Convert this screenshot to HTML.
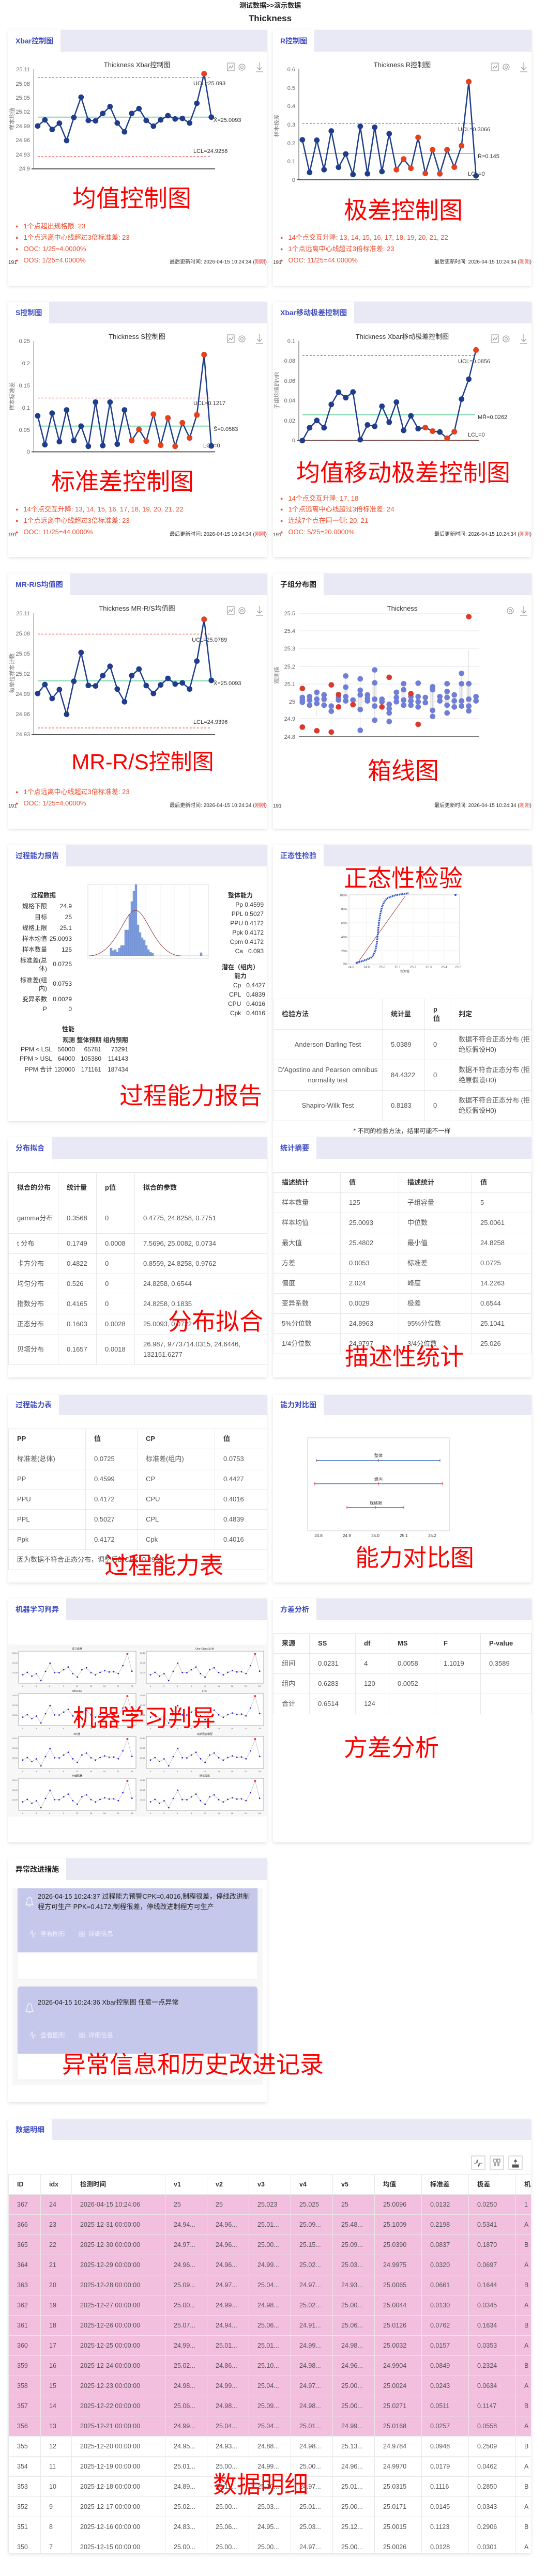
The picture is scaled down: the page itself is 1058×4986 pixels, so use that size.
<!DOCTYPE html>
<html><head><meta charset="utf-8">
<style>
*{margin:0;padding:0;box-sizing:border-box}
body{width:1058px;height:4986px;position:relative;background:#fff;font-family:"Liberation Sans","Noto Sans CJK SC",sans-serif;color:#333;overflow:hidden}
.card{position:absolute;background:#fff;box-shadow:0 2px 6px rgba(0,0,0,.12)}
.tabbar{position:absolute;left:0;right:0;top:0;height:42px;background:#e9e9f6}
.tab{position:absolute;left:0;top:0;height:42px;background:#fff;color:#3d4bc0;font-weight:bold;font-size:14px;line-height:42px;padding:0 14px;white-space:nowrap}
.tab.k{color:#222}
.big{position:absolute;color:#f00;font-size:46px;transform:translate(-50%,-50%);white-space:nowrap;line-height:1;font-family:"Liberation Sans","Noto Sans CJK SC",sans-serif}
.b{position:absolute;font-size:13px;color:#ee4d2d;white-space:nowrap;line-height:16px}
.b i{font-style:normal;font-size:9px;margin-right:10px;position:relative;top:-1px}
.ft{position:absolute;font-size:10px;color:#333;white-space:nowrap;line-height:12px}
.ft span{color:#e33}
.t{position:absolute;white-space:nowrap;font-size:12px;color:#333;line-height:14px}
table{position:absolute;border-collapse:collapse;font-size:13px;color:#555;table-layout:fixed}
td,th{border:1px solid #e8e8e8;padding:0 0 0 16px;text-align:left;vertical-align:middle;line-height:20px;overflow:hidden;white-space:nowrap}
th{font-weight:bold;color:#333}
.wr td,.wr th{white-space:normal}
svg{position:absolute;overflow:visible}
.ax{font-size:11px;fill:#666;font-family:"Liberation Sans",sans-serif}
.ti{font-size:13px;fill:#333;font-family:"Liberation Sans","Noto Sans CJK SC",sans-serif}
.lb{font-size:11px;fill:#333;font-family:"Liberation Sans",sans-serif}
.yt{font-size:11px;fill:#777;font-family:"Liberation Sans","Noto Sans CJK SC",sans-serif}
.pink td{background:#f3bfdf}
</style></head><body>

<div class="t" style="left:0;width:1045px;text-align:center;top:4px;font-size:13px;font-weight:bold;color:#222">测试数据&gt;&gt;演示数据</div>
<div class="t" style="left:0;width:1045px;text-align:center;top:26px;font-size:17px;font-weight:bold;color:#222;line-height:20px">Thickness</div>

<!-- ROW 1 -->
<div class="card" style="left:16px;top:58px;width:500px;height:495px"><div class="tabbar"></div><div class="tab">Xbar控制图</div></div>
<div class="card" style="left:528px;top:58px;width:500px;height:495px"><div class="tabbar"></div><div class="tab">R控制图</div></div>
<!-- ROW 2 -->
<div class="card" style="left:16px;top:584px;width:500px;height:494px"><div class="tabbar"></div><div class="tab">S控制图</div></div>
<div class="card" style="left:528px;top:584px;width:500px;height:494px"><div class="tabbar"></div><div class="tab">Xbar移动极差控制图</div></div>
<!-- ROW 3 -->
<div class="card" style="left:16px;top:1110px;width:500px;height:494px"><div class="tabbar"></div><div class="tab">MR-R/S均值图</div></div>
<div class="card" style="left:528px;top:1110px;width:500px;height:494px"><div class="tabbar"></div><div class="tab k">子组分布图</div></div>
<!-- ROW 4 -->
<div class="card" style="left:16px;top:1635px;width:500px;height:535px"><div class="tabbar"></div><div class="tab">过程能力报告</div></div>
<div class="card" style="left:528px;top:1635px;width:500px;height:566px"><div class="tabbar"></div><div class="tab">正态性检验</div></div>
<!-- ROW 5 -->
<div class="card" style="left:16px;top:2201px;width:500px;height:465px"><div class="tabbar"></div><div class="tab">分布拟合</div></div>
<div class="card" style="left:528px;top:2201px;width:500px;height:465px"><div class="tabbar"></div><div class="tab">统计摘要</div></div>
<!-- ROW 6 -->
<div class="card" style="left:16px;top:2700px;width:500px;height:363px"><div class="tabbar" style="height:39px"></div><div class="tab" style="height:39px;line-height:39px">过程能力表</div></div>
<div class="card" style="left:528px;top:2700px;width:500px;height:363px"><div class="tabbar" style="height:39px"></div><div class="tab" style="height:39px;line-height:39px">能力对比图</div></div>
<!-- ROW 7 -->
<div class="card" style="left:16px;top:3094px;width:500px;height:472px"><div class="tabbar"></div><div class="tab">机器学习判异</div></div>
<div class="card" style="left:528px;top:3094px;width:500px;height:472px"><div class="tabbar"></div><div class="tab">方差分析</div></div>
<!-- abnormal -->
<div class="card" style="left:16px;top:3597px;width:500px;height:472px"><div class="tabbar"></div><div class="tab k">异常改进措施</div></div>
<!-- data -->
<div class="card" style="left:16px;top:4102px;width:1011px;height:840px"><div class="tabbar" style="height:40px"></div><div class="tab" style="height:40px;line-height:40px">数据明细</div></div>

<!-- ========== ROW 1 SVG ========== -->
<svg style="left:0;top:0" width="1058" height="560">
<defs>
<marker id="m1" markerUnits="userSpaceOnUse" markerWidth="20" markerHeight="40" refX="10" refY="20" overflow="visible"><ellipse cx="10" cy="20" rx="8" ry="15" fill="#1f3d8a"/></marker>
<g id="icons"><rect x="-7" y="-8" width="13" height="15" fill="none" stroke="#888" stroke-width="1"/><polyline points="-5,4 -2,-2 1,2 4,-5" fill="none" stroke="#888"/><circle cx="21" cy="0" r="6" fill="none" stroke="#888"/><circle cx="21" cy="0" r="2.5" fill="none" stroke="#888"/><path d="M55,-9 V5 M50,0 L55,5 L60,0 M48,9 H62" fill="none" stroke="#888"/></g>
</defs>
<!-- left xbar -->
<text class="ti" x="265" y="130" text-anchor="middle">Thickness Xbar控制图</text>
<use href="#icons" x="447" y="130"/>
<g class="ax" text-anchor="end"><text x="58" y="138">25.11</text><text x="58" y="166">25.08</text><text x="58" y="193">25.05</text><text x="58" y="220">25.02</text><text x="58" y="248">24.99</text><text x="58" y="275">24.96</text><text x="58" y="303">24.93</text><text x="58" y="330">24.9</text></g>
<text class="yt" transform="translate(27,230) rotate(-90)" text-anchor="middle">样本均值</text>
<line x1="65.4" y1="134" x2="65.4" y2="327" stroke="#555"/><line x1="61" y1="326.7" x2="416" y2="326.7" stroke="#555" stroke-width="2"/>
<line x1="73" y1="150.3" x2="407" y2="150.3" stroke="#e22" stroke-dasharray="4,3"/>
<line x1="73" y1="226.7" x2="407" y2="226.7" stroke="#7fd6b0" stroke-width="2"/>
<line x1="73" y1="303" x2="407" y2="303" stroke="#e22" stroke-dasharray="4,3"/>
<text class="lb" x="374" y="165">UCL=25.093</text><text class="lb" x="413" y="236">X̄=25.0093</text><text class="lb" x="374" y="296">LCL=24.9256</text>
<!-- right R -->
<text class="ti" x="778" y="130" text-anchor="middle">Thickness R控制图</text>
<use href="#icons" x="958" y="130"/>
<g class="ax" text-anchor="end"><text x="571" y="138">0.6</text><text x="571" y="174">0.5</text><text x="571" y="209">0.4</text><text x="571" y="245">0.3</text><text x="571" y="281">0.2</text><text x="571" y="316">0.1</text><text x="571" y="352">0</text></g>
<text class="yt" transform="translate(539,243) rotate(-90)" text-anchor="middle">样本极差</text>
<line x1="578" y1="134" x2="578" y2="348" stroke="#555"/><line x1="574" y1="348" x2="927" y2="348" stroke="#555" stroke-width="2"/>
<line x1="585" y1="239.2" x2="919" y2="239.2" stroke="#e22" stroke-dasharray="4,3"/>
<line x1="585" y1="297" x2="919" y2="297" stroke="#7fd6b0" stroke-width="2"/>
<line x1="585" y1="347.5" x2="919" y2="347.5" stroke="#c33" stroke-dasharray="4,3"/>
<text class="lb" x="886" y="254">UCL=0.3066</text><text class="lb" x="924" y="306">R̄=0.145</text><text class="lb" x="905" y="340">LCL=0</text>
<g transform="scale(0.6745 0.357)">
<polyline vector-effect="non-scaling-stroke" fill="none" stroke="#1f3d8a" stroke-width="2.5" marker-start="url(#m1)" marker-mid="url(#m1)" marker-end="url(#m1)" points="108,683 128.75,650 149.5,702 170.25,668 191,762 211.75,637 232.5,527 253.25,653 274,655 294.75,615 315.5,578 336.25,667 357,715 377.75,615 398.5,589 419.25,653 440,684 460.75,650 481.5,627 502.25,645 523,642 543.75,667 564.5,560 585.25,400 606,635"/>
<ellipse cx="585.25" cy="400" rx="8" ry="15" fill="#e8401c"/>
<polyline vector-effect="non-scaling-stroke" fill="none" stroke="#1f3d8a" stroke-width="2.5" marker-start="url(#m1)" marker-mid="url(#m1)" marker-end="url(#m1)" points="867,758 887.75,935 908.5,760 929.25,920 950,710 970.75,907 991.5,835 1012.25,946 1033,685 1053.75,942 1074.5,690 1095.25,930 1116,725 1136.75,920 1157.5,862 1178.25,912 1199,745 1219.75,940 1240.5,812 1261.25,942 1282,812 1302.75,906 1323.5,790 1344.25,443 1365,953"/>
<g fill="#e8401c"><ellipse cx="1136.75" cy="920" rx="8" ry="15"/><ellipse cx="1157.5" cy="862" rx="8" ry="15"/><ellipse cx="1178.25" cy="912" rx="8" ry="15"/><ellipse cx="1199" cy="745" rx="8" ry="15"/><ellipse cx="1219.75" cy="940" rx="8" ry="15"/><ellipse cx="1240.5" cy="812" rx="8" ry="15"/><ellipse cx="1261.25" cy="942" rx="8" ry="15"/><ellipse cx="1282" cy="812" rx="8" ry="15"/><ellipse cx="1302.75" cy="906" rx="8" ry="15"/><ellipse cx="1323.5" cy="790" rx="8" ry="15"/><ellipse cx="1344.25" cy="443" rx="8" ry="15"/></g>
</g>
</svg>
<div class="big" style="left:255px;top:384px">均值控制图</div>
<div class="big" style="left:780px;top:407px">极差控制图</div>
<div class="b" style="left:30px;top:430px"><i>●</i>1个点超出规格限: 23</div>
<div class="b" style="left:30px;top:452px"><i>●</i>1个点远离中心线超过3倍标准差: 23</div>
<div class="b" style="left:30px;top:474px"><i>●</i>OOC: 1/25=4.0000%</div>
<div class="b" style="left:30px;top:496px"><i>●</i>OOS: 1/25=4.0000%</div>
<div class="b" style="left:542px;top:452px"><i>●</i>14个点交互升降: 13, 14, 15, 16, 17, 18, 19, 20, 21, 22</div>
<div class="b" style="left:542px;top:474px"><i>●</i>1个点远离中心线超过3倍标准差: 23</div>
<div class="b" style="left:542px;top:496px"><i>●</i>OOC: 11/25=44.0000%</div>
<div class="ft" style="left:16px;top:503px">191</div><div class="ft" style="right:542px;top:502px">最后更新时间: 2026-04-15 10:24:34 (<span>刚刚</span>)</div>
<div class="ft" style="left:528px;top:503px">191</div><div class="ft" style="right:30px;top:502px">最后更新时间: 2026-04-15 10:24:34 (<span>刚刚</span>)</div>

<!-- ========== ROW 2 SVG ========== -->
<svg style="left:0;top:560px" width="1058" height="540">
<defs><marker id="m2" markerUnits="userSpaceOnUse" markerWidth="20" markerHeight="40" refX="10" refY="20" overflow="visible"><ellipse cx="10" cy="20" rx="8" ry="15.7" fill="#1f3d8a"/></marker></defs>
<text class="ti" x="265" y="96" text-anchor="middle">Thickness S控制图</text>
<use href="#icons" x="447" y="96"/>
<g class="ax" text-anchor="end"><text x="58" y="104">0.25</text><text x="58" y="147">0.2</text><text x="58" y="190">0.15</text><text x="58" y="233">0.1</text><text x="58" y="276">0.05</text><text x="58" y="318">0</text></g>
<text class="yt" transform="translate(27,207) rotate(-90)" text-anchor="middle">样本标准差</text>
<line x1="65.4" y1="100" x2="65.4" y2="314.5" stroke="#555"/><line x1="61" y1="314.5" x2="416" y2="314.5" stroke="#555" stroke-width="2"/>
<line x1="73" y1="210.4" x2="407" y2="210.4" stroke="#e22" stroke-dasharray="4,3"/>
<line x1="73" y1="264.8" x2="407" y2="264.8" stroke="#7fd6b0" stroke-width="2"/>
<line x1="73" y1="314" x2="407" y2="314" stroke="#c33" stroke-dasharray="4,3"/>
<text class="lb" x="374" y="224">UCL=0.1217</text><text class="lb" x="413" y="274">S̄=0.0583</text><text class="lb" x="393" y="306">LCL=0</text>
<text class="ti" x="778" y="96" text-anchor="middle">Thickness Xbar移动极差控制图</text>
<use href="#icons" x="958" y="96"/>
<g class="ax" text-anchor="end"><text x="571" y="104">0.1</text><text x="571" y="142">0.08</text><text x="571" y="181">0.06</text><text x="571" y="219">0.04</text><text x="571" y="258">0.02</text><text x="571" y="296">0</text></g>
<text class="yt" transform="translate(539,196) rotate(-90)" text-anchor="middle">子组均值的MR</text>
<line x1="578" y1="100" x2="578" y2="292.5" stroke="#555"/><line x1="574" y1="292.5" x2="927" y2="292.5" stroke="#555" stroke-width="2"/>
<line x1="585" y1="128.5" x2="919" y2="128.5" stroke="#e22" stroke-dasharray="4,3"/>
<line x1="585" y1="242.8" x2="919" y2="242.8" stroke="#7fd6b0" stroke-width="2"/>
<line x1="585" y1="292" x2="919" y2="292" stroke="#c33" stroke-dasharray="4,3"/>
<text class="lb" x="886" y="143">UCL=0.0856</text><text class="lb" x="924" y="251">MR̄=0.0262</text><text class="lb" x="905" y="285">LCL=0</text>
<g transform="scale(0.6745 0.3444)">
<polyline vector-effect="non-scaling-stroke" fill="none" stroke="#1f3d8a" stroke-width="2.5" marker-start="url(#m2)" marker-mid="url(#m2)" marker-end="url(#m2)" points="108,711 128.75,873 149.5,696 170.25,856 191,678 211.75,850 232.5,769 253.25,882 274,634 294.75,878 315.5,634 336.25,870 357,678 377.75,850 398.5,787 419.25,853 440,702 460.75,876 481.5,723 502.25,882 523,750 543.75,835 564.5,706 585.25,367 606,880"/>
<g fill="#e8401c"><ellipse cx="377.75" cy="850" rx="8" ry="15.7"/><ellipse cx="398.5" cy="787" rx="8" ry="15.7"/><ellipse cx="419.25" cy="853" rx="8" ry="15.7"/><ellipse cx="440" cy="702" rx="8" ry="15.7"/><ellipse cx="460.75" cy="876" rx="8" ry="15.7"/><ellipse cx="481.5" cy="723" rx="8" ry="15.7"/><ellipse cx="502.25" cy="882" rx="8" ry="15.7"/><ellipse cx="523" cy="750" rx="8" ry="15.7"/><ellipse cx="543.75" cy="835" rx="8" ry="15.7"/><ellipse cx="564.5" cy="706" rx="8" ry="15.7"/><ellipse cx="585.25" cy="367" rx="8" ry="15.7"/></g>
<polyline vector-effect="non-scaling-stroke" fill="none" stroke="#1f3d8a" stroke-width="2.5" marker-start="url(#m2)" marker-mid="url(#m2)" marker-end="url(#m2)" points="867,850 887.75,778 908.5,737 929.25,778 950,647 970.75,578 991.5,609 1012.25,577 1033,845 1053.75,762 1074.5,770 1095.25,657 1116,747 1136.75,634 1157.5,793 1178.25,711 1199,783 1219.75,777 1240.5,797 1261.25,802 1282,837 1302.75,800 1323.5,617 1344.25,505 1365,341"/>
<g fill="#e8401c"><ellipse cx="1219.75" cy="777" rx="8" ry="15.7"/><ellipse cx="1240.5" cy="797" rx="8" ry="15.7"/><ellipse cx="1282" cy="837" rx="8" ry="15.7"/><ellipse cx="1302.75" cy="800" rx="8" ry="15.7"/><ellipse cx="1365" cy="341" rx="8" ry="15.7"/></g>
</g>
</svg>
<div class="big" style="left:237px;top:932px">标准差控制图</div>
<div class="big" style="left:780px;top:915px">均值移动极差控制图</div>
<div class="b" style="left:30px;top:978px"><i>●</i>14个点交互升降: 13, 14, 15, 16, 17, 18, 19, 20, 21, 22</div>
<div class="b" style="left:30px;top:1000px"><i>●</i>1个点远离中心线超过3倍标准差: 23</div>
<div class="b" style="left:30px;top:1022px"><i>●</i>OOC: 11/25=44.0000%</div>
<div class="b" style="left:542px;top:957px"><i>●</i>14个点交互升降: 17, 18</div>
<div class="b" style="left:542px;top:978px"><i>●</i>1个点远离中心线超过3倍标准差: 24</div>
<div class="b" style="left:542px;top:1000px"><i>●</i>连续7个点在同一侧: 20, 21</div>
<div class="b" style="left:542px;top:1022px"><i>●</i>OOC: 5/25=20.0000%</div>
<div class="ft" style="left:16px;top:1030px">191</div><div class="ft" style="right:542px;top:1029px">最后更新时间: 2026-04-15 10:24:34 (<span>刚刚</span>)</div>
<div class="ft" style="left:528px;top:1030px">191</div><div class="ft" style="right:30px;top:1029px">最后更新时间: 2026-04-15 10:24:34 (<span>刚刚</span>)</div>

<!-- ========== ROW 3 SVG ========== -->
<svg style="left:0;top:1090px" width="1058" height="480">
<defs><marker id="m3" markerUnits="userSpaceOnUse" markerWidth="20" markerHeight="40" refX="10" refY="20" overflow="visible"><ellipse cx="10" cy="20" rx="8" ry="16.2" fill="#1f3d8a"/></marker></defs>
<text class="ti" x="265" y="92" text-anchor="middle">Thickness MR-R/S均值图</text>
<use href="#icons" x="447" y="92"/>
<g class="ax" text-anchor="end"><text x="58" y="101">25.11</text><text x="58" y="140">25.08</text><text x="58" y="179">25.05</text><text x="58" y="218">25.02</text><text x="58" y="257">24.99</text><text x="58" y="296">24.96</text><text x="58" y="335">24.93</text></g>
<text class="yt" transform="translate(27,213) rotate(-90)" text-anchor="middle">每单位样本计数</text>
<line x1="65.4" y1="97" x2="65.4" y2="332" stroke="#555"/><line x1="61" y1="332" x2="416" y2="332" stroke="#555" stroke-width="2"/>
<line x1="73" y1="137.3" x2="407" y2="137.3" stroke="#e22" stroke-dasharray="4,3"/>
<line x1="73" y1="227.7" x2="407" y2="227.7" stroke="#7fd6b0" stroke-width="2"/>
<line x1="73" y1="319" x2="407" y2="319" stroke="#e22" stroke-dasharray="4,3"/>
<text class="lb" x="371" y="152">UCL=25.0789</text><text class="lb" x="413" y="236">X̄=25.0093</text><text class="lb" x="374" y="311">LCL=24.9396</text>
<!-- boxplot -->
<text class="ti" x="778" y="92" text-anchor="middle">Thickness</text>
<g transform="translate(987,92)"><circle cx="0" cy="0" r="6" fill="none" stroke="#888"/><circle cx="0" cy="0" r="2.5" fill="none" stroke="#888"/><path d="M26,-9 V5 M21,0 L26,5 L31,0 M19,9 H33" fill="none" stroke="#888"/></g>
<g stroke="#e4e4ee"><line x1="578" y1="97" x2="927" y2="97"/><line x1="578" y1="131" x2="927" y2="131"/><line x1="578" y1="165" x2="927" y2="165"/><line x1="578" y1="200" x2="927" y2="200"/><line x1="578" y1="234" x2="927" y2="234"/><line x1="578" y1="268" x2="927" y2="268"/><line x1="578" y1="301" x2="927" y2="301"/></g>
<line x1="578" y1="336" x2="927" y2="336" stroke="#555" stroke-width="1.5"/>
<g class="ax" text-anchor="end"><text x="571" y="101">25.5</text><text x="571" y="135">25.4</text><text x="571" y="169">25.3</text><text x="571" y="204">25.2</text><text x="571" y="238">25.1</text><text x="571" y="272">25</text><text x="571" y="305">24.9</text><text x="571" y="340">24.8</text></g>
<text class="yt" transform="translate(539,217) rotate(-90)" text-anchor="middle">观测值</text>
<g transform="scale(0.6745 0.3333)">
<polyline vector-effect="non-scaling-stroke" fill="none" stroke="#1f3d8a" stroke-width="2.5" marker-start="url(#m3)" marker-mid="url(#m3)" marker-end="url(#m3)" points="108,757 128.75,705 149.5,786 170.25,734 191,878 211.75,686 232.5,519 253.25,710 274,713 294.75,653 315.5,599 336.25,731 357,805 377.75,653 398.5,615 419.25,711 440,757 460.75,707 481.5,669 502.25,702 523,695 543.75,731 564.5,569 585.25,326 606,681"/>
<ellipse cx="585.25" cy="326" rx="8" ry="16.2" fill="#e8401c"/>
<g fill="#eee" stroke="#ccc" vector-effect="non-scaling-stroke">
<rect x="862" y="775" width="10" height="35"/><rect x="883" y="780" width="10" height="40"/><rect x="903" y="760" width="10" height="55"/><rect x="924" y="770" width="10" height="50"/><rect x="945" y="830" width="10" height="30"/><rect x="986" y="720" width="10" height="80"/><rect x="1028" y="740" width="10" height="110"/><rect x="1069" y="695" width="10" height="135"/><rect x="1111" y="815" width="10" height="55"/><rect x="1152" y="735" width="10" height="90"/><rect x="1194" y="775" width="10" height="60"/><rect x="1235" y="730" width="10" height="125"/><rect x="1277" y="745" width="10" height="80"/><rect x="1298" y="765" width="10" height="70"/><rect x="1318" y="700" width="10" height="130"/><rect x="1339" y="700" width="10" height="160"/>
</g>
<g stroke="#ccc" vector-effect="non-scaling-stroke"><line x1="867" y1="750" x2="867" y2="835"/><line x1="908.5" y1="745" x2="908.5" y2="885"/><line x1="950" y1="795" x2="950" y2="900"/><line x1="991.5" y1="655" x2="991.5" y2="805"/><line x1="1033" y1="672" x2="1033" y2="970"/><line x1="1074.5" y1="620" x2="1074.5" y2="912"/><line x1="1116" y1="745" x2="1116" y2="920"/><line x1="1199" y1="697" x2="1199" y2="840"/><line x1="1240.5" y1="718" x2="1240.5" y2="890"/><line x1="1282" y1="700" x2="1282" y2="870"/><line x1="1323.5" y1="640" x2="1323.5" y2="830"/><line x1="1344.25" y1="505" x2="1344.25" y2="860"/></g>
<g fill="#6f7fd8">
<ellipse cx="867" cy="780" rx="8" ry="16"/><ellipse cx="867" cy="795" rx="8" ry="16"/><ellipse cx="867" cy="808" rx="8" ry="16"/>
<ellipse cx="887.75" cy="775" rx="8" ry="16"/><ellipse cx="887.75" cy="795" rx="8" ry="16"/><ellipse cx="887.75" cy="825" rx="8" ry="16"/>
<ellipse cx="908.5" cy="750" rx="8" ry="16"/><ellipse cx="908.5" cy="790" rx="8" ry="16"/><ellipse cx="908.5" cy="815" rx="8" ry="16"/>
<ellipse cx="929.25" cy="765" rx="8" ry="16"/><ellipse cx="929.25" cy="790" rx="8" ry="16"/><ellipse cx="929.25" cy="825" rx="8" ry="16"/>
<ellipse cx="950" cy="830" rx="8" ry="16"/><ellipse cx="950" cy="860" rx="8" ry="16"/>
<ellipse cx="970.75" cy="780" rx="8" ry="16"/><ellipse cx="970.75" cy="795" rx="8" ry="16"/>
<ellipse cx="991.5" cy="655" rx="8" ry="16"/><ellipse cx="991.5" cy="720" rx="8" ry="16"/><ellipse cx="991.5" cy="775" rx="8" ry="16"/><ellipse cx="991.5" cy="800" rx="8" ry="16"/>
<ellipse cx="1012.25" cy="795" rx="8" ry="16"/>
<ellipse cx="1033" cy="672" rx="8" ry="16"/><ellipse cx="1033" cy="738" rx="8" ry="16"/><ellipse cx="1033" cy="765" rx="8" ry="16"/><ellipse cx="1033" cy="850" rx="8" ry="16"/><ellipse cx="1033" cy="971" rx="8" ry="16"/>
<ellipse cx="1053.75" cy="765" rx="8" ry="16"/><ellipse cx="1053.75" cy="785" rx="8" ry="16"/><ellipse cx="1053.75" cy="800" rx="8" ry="16"/>
<ellipse cx="1074.5" cy="620" rx="8" ry="16"/><ellipse cx="1074.5" cy="695" rx="8" ry="16"/><ellipse cx="1074.5" cy="790" rx="8" ry="16"/><ellipse cx="1074.5" cy="830" rx="8" ry="16"/><ellipse cx="1074.5" cy="912" rx="8" ry="16"/>
<ellipse cx="1095.25" cy="790" rx="8" ry="16"/><ellipse cx="1095.25" cy="805" rx="8" ry="16"/>
<ellipse cx="1116" cy="820" rx="8" ry="16"/><ellipse cx="1116" cy="845" rx="8" ry="16"/><ellipse cx="1116" cy="870" rx="8" ry="16"/><ellipse cx="1116" cy="920" rx="8" ry="16"/>
<ellipse cx="1136.75" cy="750" rx="8" ry="16"/><ellipse cx="1136.75" cy="780" rx="8" ry="16"/><ellipse cx="1136.75" cy="805" rx="8" ry="16"/>
<ellipse cx="1157.5" cy="700" rx="8" ry="16"/><ellipse cx="1157.5" cy="735" rx="8" ry="16"/><ellipse cx="1157.5" cy="795" rx="8" ry="16"/><ellipse cx="1157.5" cy="825" rx="8" ry="16"/>
<ellipse cx="1178.25" cy="775" rx="8" ry="16"/><ellipse cx="1178.25" cy="800" rx="8" ry="16"/><ellipse cx="1178.25" cy="825" rx="8" ry="16"/>
<ellipse cx="1199" cy="697" rx="8" ry="16"/><ellipse cx="1199" cy="775" rx="8" ry="16"/><ellipse cx="1199" cy="805" rx="8" ry="16"/><ellipse cx="1199" cy="835" rx="8" ry="16"/>
<ellipse cx="1219.75" cy="780" rx="8" ry="16"/><ellipse cx="1219.75" cy="810" rx="8" ry="16"/>
<ellipse cx="1240.5" cy="718" rx="8" ry="16"/><ellipse cx="1240.5" cy="735" rx="8" ry="16"/><ellipse cx="1240.5" cy="855" rx="8" ry="16"/><ellipse cx="1240.5" cy="890" rx="8" ry="16"/>
<ellipse cx="1261.25" cy="775" rx="8" ry="16"/><ellipse cx="1261.25" cy="800" rx="8" ry="16"/>
<ellipse cx="1282" cy="700" rx="8" ry="16"/><ellipse cx="1282" cy="745" rx="8" ry="16"/><ellipse cx="1282" cy="780" rx="8" ry="16"/><ellipse cx="1282" cy="825" rx="8" ry="16"/><ellipse cx="1282" cy="870" rx="8" ry="16"/>
<ellipse cx="1302.75" cy="765" rx="8" ry="16"/><ellipse cx="1302.75" cy="800" rx="8" ry="16"/><ellipse cx="1302.75" cy="835" rx="8" ry="16"/>
<ellipse cx="1323.5" cy="640" rx="8" ry="16"/><ellipse cx="1323.5" cy="700" rx="8" ry="16"/><ellipse cx="1323.5" cy="800" rx="8" ry="16"/><ellipse cx="1323.5" cy="830" rx="8" ry="16"/>
<ellipse cx="1344.25" cy="700" rx="8" ry="16"/><ellipse cx="1344.25" cy="790" rx="8" ry="16"/><ellipse cx="1344.25" cy="830" rx="8" ry="16"/><ellipse cx="1344.25" cy="858" rx="8" ry="16"/>
<ellipse cx="1365" cy="775" rx="8" ry="16"/><ellipse cx="1365" cy="800" rx="8" ry="16"/>
</g>
<g fill="#d93a2e"><ellipse cx="867" cy="728" rx="8" ry="16"/><ellipse cx="867" cy="952" rx="8" ry="16"/><ellipse cx="908.5" cy="973" rx="8" ry="16"/><ellipse cx="950" cy="707" rx="8" ry="16"/><ellipse cx="950" cy="981" rx="8" ry="16"/><ellipse cx="970.75" cy="763" rx="8" ry="16"/><ellipse cx="970.75" cy="835" rx="8" ry="16"/><ellipse cx="1012.25" cy="822" rx="8" ry="16"/><ellipse cx="1095.25" cy="835" rx="8" ry="16"/><ellipse cx="1116" cy="663" rx="8" ry="16"/><ellipse cx="1178.25" cy="758" rx="8" ry="16"/><ellipse cx="1199" cy="936" rx="8" ry="16"/><ellipse cx="1344.25" cy="311" rx="8" ry="16"/></g>
</g>
</svg>
<div class="big" style="left:276px;top:1475px;font-size:42px">MR-R/S控制图</div>
<div class="big" style="left:780px;top:1492px">箱线图</div>
<div class="b" style="left:30px;top:1525px"><i>●</i>1个点远离中心线超过3倍标准差: 23</div>
<div class="b" style="left:30px;top:1547px"><i>●</i>OOC: 1/25=4.0000%</div>
<div class="ft" style="left:16px;top:1555px">191</div><div class="ft" style="right:542px;top:1554px">最后更新时间: 2026-04-15 10:24:34 (<span>刚刚</span>)</div>
<div class="ft" style="left:528px;top:1555px">191</div><div class="ft" style="right:30px;top:1554px">最后更新时间: 2026-04-15 10:24:34 (<span>刚刚</span>)</div>

<!-- ========== ROW 4 process capability ========== -->
<div style="position:absolute;left:0;top:0;font-size:11.5px;color:#333">
<div class="t" style="left:60px;top:1726px;font-weight:bold;font-size:12px">过程数据</div>
<div class="t" style="left:30px;width:61px;text-align:right;top:1747px">规格下限</div><div class="t" style="left:95px;width:44px;text-align:right;top:1747px">24.9</div>
<div class="t" style="left:30px;width:61px;text-align:right;top:1768px">目标</div><div class="t" style="left:95px;width:44px;text-align:right;top:1768px">25</div>
<div class="t" style="left:30px;width:61px;text-align:right;top:1789px">规格上限</div><div class="t" style="left:95px;width:44px;text-align:right;top:1789px">25.1</div>
<div class="t" style="left:30px;width:61px;text-align:right;top:1810px">样本均值</div><div class="t" style="left:90px;width:49px;text-align:right;top:1810px">25.0093</div>
<div class="t" style="left:30px;width:61px;text-align:right;top:1831px">样本数量</div><div class="t" style="left:95px;width:44px;text-align:right;top:1831px">125</div>
<div class="t" style="left:30px;width:61px;text-align:right;top:1851px;white-space:normal;line-height:16px;left:38px;width:53px">标准差(总体)</div><div class="t" style="left:95px;width:44px;text-align:right;top:1859px">0.0725</div>
<div class="t" style="top:1889px;white-space:normal;line-height:16px;left:38px;width:53px;text-align:right">标准差(组内)</div><div class="t" style="left:95px;width:44px;text-align:right;top:1897px">0.0753</div>
<div class="t" style="left:30px;width:61px;text-align:right;top:1927px">变异系数</div><div class="t" style="left:95px;width:44px;text-align:right;top:1927px">0.0029</div>
<div class="t" style="left:30px;width:61px;text-align:right;top:1946px">P</div><div class="t" style="left:95px;width:44px;text-align:right;top:1946px">0</div>
<div class="t" style="left:420px;width:90px;text-align:center;top:1726px;font-weight:bold">整体能力</div>
<div class="t" style="left:420px;width:90px;text-align:right;top:1744px">Pp 0.4599</div>
<div class="t" style="left:420px;width:90px;text-align:right;top:1762px">PPL 0.5027</div>
<div class="t" style="left:420px;width:90px;text-align:right;top:1780px">PPU 0.4172</div>
<div class="t" style="left:420px;width:90px;text-align:right;top:1798px">Ppk 0.4172</div>
<div class="t" style="left:420px;width:90px;text-align:right;top:1816px">Cpm 0.4172</div>
<div class="t" style="left:420px;width:90px;text-align:right;top:1834px">Ca&nbsp;&nbsp;&nbsp;0.093</div>
<div class="t" style="left:420px;width:90px;text-align:center;top:1865px;font-weight:bold">潜在（组内）</div>
<div class="t" style="left:420px;width:90px;text-align:center;top:1882px;font-weight:bold">能力</div>
<div class="t" style="left:420px;width:93px;text-align:right;top:1900px">Cp&nbsp;&nbsp;&nbsp;0.4427</div>
<div class="t" style="left:420px;width:93px;text-align:right;top:1918px">CPL&nbsp;&nbsp;&nbsp;0.4839</div>
<div class="t" style="left:420px;width:93px;text-align:right;top:1936px">CPU&nbsp;&nbsp;&nbsp;0.4016</div>
<div class="t" style="left:420px;width:93px;text-align:right;top:1954px">Cpk&nbsp;&nbsp;&nbsp;0.4016</div>
<div class="t" style="left:120px;top:1985px;font-weight:bold">性能</div>
<div class="t" style="left:121px;top:2006px;font-weight:bold">观测 整体预期 组内预期</div>
<div class="t" style="left:30px;width:71px;text-align:right;top:2024px">PPM &lt; LSL</div><div class="t" style="left:100px;width:45px;text-align:right;top:2024px">56000</div><div class="t" style="left:146px;width:50px;text-align:right;top:2024px">65781</div><div class="t" style="left:197px;width:51px;text-align:right;top:2024px">73291</div>
<div class="t" style="left:30px;width:71px;text-align:right;top:2042px">PPM &gt; USL</div><div class="t" style="left:100px;width:45px;text-align:right;top:2042px">64000</div><div class="t" style="left:146px;width:50px;text-align:right;top:2042px">105380</div><div class="t" style="left:197px;width:51px;text-align:right;top:2042px">114143</div>
<div class="t" style="left:30px;width:71px;text-align:right;top:2063px">PPM 合计</div><div class="t" style="left:96px;width:49px;text-align:right;top:2063px">120000</div><div class="t" style="left:146px;width:50px;text-align:right;top:2063px">171161</div><div class="t" style="left:197px;width:51px;text-align:right;top:2063px">187434</div>
</div>
<svg style="left:0;top:0" width="1058" height="2300">
<rect x="170" y="1712" width="233" height="143" fill="#fff" stroke="#ddd"/>
<g stroke="#f0f0f0"><line x1="198" y1="1712" x2="198" y2="1855"/><line x1="226" y1="1712" x2="226" y2="1855"/><line x1="254" y1="1712" x2="254" y2="1855"/><line x1="282" y1="1712" x2="282" y2="1855"/><line x1="310" y1="1712" x2="310" y2="1855"/><line x1="338" y1="1712" x2="338" y2="1855"/><line x1="366" y1="1712" x2="366" y2="1855"/></g>
<g fill="#7e9ddc" stroke="#5a7ac8" stroke-width=".4">
<rect x="213" y="1835" width="4" height="15"/><rect x="217" y="1840" width="4" height="10"/><rect x="221" y="1838" width="4" height="12"/><rect x="225" y="1843" width="4" height="7"/><rect x="229" y="1835" width="4" height="15"/><rect x="233" y="1830" width="4" height="20"/><rect x="237" y="1830" width="4" height="20"/><rect x="241" y="1800" width="4" height="50"/><rect x="245" y="1800" width="4" height="50"/><rect x="249" y="1770" width="4" height="80"/><rect x="253" y="1745" width="4" height="105"/><rect x="257" y="1725" width="4" height="125"/><rect x="261" y="1712" width="4" height="138"/><rect x="265" y="1790" width="4" height="60"/><rect x="269" y="1805" width="4" height="45"/><rect x="273" y="1815" width="4" height="35"/><rect x="277" y="1820" width="4" height="30"/><rect x="281" y="1830" width="4" height="20"/><rect x="285" y="1838" width="4" height="12"/><rect x="289" y="1843" width="4" height="7"/><rect x="293" y="1845" width="4" height="5"/><rect x="387" y="1844" width="4" height="6"/>
</g>
<path d="M172,1850 C225,1850 240,1762 262,1762 C284,1762 300,1850 350,1850" fill="none" stroke="#8b3a3a" stroke-width="1"/>
<line x1="170" y1="1850" x2="403" y2="1850" stroke="#999" stroke-width=".5"/>
<!-- normality plot -->
<rect x="675" y="1732" width="214" height="134" fill="#fff" stroke="#ccc"/>
<g stroke="#f0f0f0"><line x1="675" y1="1759" x2="889" y2="1759"/><line x1="675" y1="1786" x2="889" y2="1786"/><line x1="675" y1="1813" x2="889" y2="1813"/><line x1="675" y1="1840" x2="889" y2="1840"/><line x1="709" y1="1732" x2="709" y2="1866"/><line x1="739" y1="1732" x2="739" y2="1866"/><line x1="769" y1="1732" x2="769" y2="1866"/><line x1="799" y1="1732" x2="799" y2="1866"/><line x1="829" y1="1732" x2="829" y2="1866"/><line x1="859" y1="1732" x2="859" y2="1866"/></g>
<g font-size="6" fill="#555" text-anchor="end" font-family="Liberation Sans"><text x="672" y="1735">100%</text><text x="672" y="1762">80%</text><text x="672" y="1789">60%</text><text x="672" y="1816">40%</text><text x="672" y="1843">20%</text><text x="672" y="1868">0%</text></g>
<g font-size="6" fill="#555" text-anchor="middle" font-family="Liberation Sans"><text x="679" y="1874">24.8</text><text x="709" y="1874">24.9</text><text x="739" y="1874">25.0</text><text x="769" y="1874">25.1</text><text x="799" y="1874">25.2</text><text x="829" y="1874">25.3</text><text x="859" y="1874">25.4</text><text x="886" y="1874">25.5</text><text x="783" y="1882">观测值</text></g>
<line x1="690" y1="1866" x2="784" y2="1734" stroke="#b03a3a" stroke-width="1"/>
<polyline points="688,1864 695,1862 702,1860 710,1857 717,1854 722,1849 726,1840 729,1825 731,1805 733,1785 736,1767 739,1755 743,1746 748,1739 755,1736 761,1734 768,1732 776,1731 781,1730 790,1729" fill="none" stroke="#2a4ec8" stroke-width="3.5" stroke-dasharray="2.2,1.2"/>
<circle cx="881" cy="1732" r="2" fill="#2a4ec8"/>
</svg>
<div class="big" style="left:369px;top:2121px">过程能力报告</div>
<div class="big" style="left:780px;top:1700px">正态性检验</div>
<table class="wr" style="left:528px;top:1933px;width:499px">
<colgroup><col style="width:211px"><col style="width:82px"><col style="width:49px"><col style="width:157px"></colgroup>
<tr style="height:59px"><th>检验方法</th><th>统计量</th><th style="line-height:18px">p<br>值</th><th>判定</th></tr>
<tr style="height:59px"><td style="text-align:center;padding:0">Anderson-Darling Test</td><td>5.0389</td><td>0</td><td>数据不符合正态分布 (拒绝原假设H0)</td></tr>
<tr style="height:59px"><td style="text-align:center;padding:0">D'Agostino and Pearson omnibus normality test</td><td>84.4322</td><td>0</td><td>数据不符合正态分布 (拒绝原假设H0)</td></tr>
<tr style="height:59px"><td style="text-align:center;padding:0">Shapiro-Wilk Test</td><td>0.8183</td><td>0</td><td>数据不符合正态分布 (拒绝原假设H0)</td></tr>
</table>
<div class="t" style="left:528px;width:499px;text-align:center;top:2182px;font-size:12px">* 不同的检验方法，结果可能不一样</div>

<!-- ========== ROW 5 ========== -->
<table class="wr" style="left:16px;top:2269px;width:500px">
<colgroup><col style="width:96px"><col style="width:74px"><col style="width:74px"><col style="width:256px"></colgroup>
<tr style="height:59px"><th>拟合的分布</th><th>统计量</th><th>p值</th><th>拟合的参数</th></tr>
<tr style="height:59px"><td>gamma分布</td><td>0.3568</td><td>0</td><td>0.4775, 24.8258, 0.7751</td></tr>
<tr style="height:39px"><td>t 分布</td><td>0.1749</td><td>0.0008</td><td>7.5696, 25.0082, 0.0734</td></tr>
<tr style="height:39px"><td>卡方分布</td><td>0.4822</td><td>0</td><td>0.8559, 24.8258, 0.9762</td></tr>
<tr style="height:39px"><td>均匀分布</td><td>0.526</td><td>0</td><td>24.8258, 0.6544</td></tr>
<tr style="height:39px"><td>指数分布</td><td>0.4165</td><td>0</td><td>24.8258, 0.1835</td></tr>
<tr style="height:39px"><td>正态分布</td><td>0.1603</td><td>0.0028</td><td>25.0093, 0.0722</td></tr>
<tr style="height:59px"><td>贝塔分布</td><td>0.1657</td><td>0.0018</td><td>26.987, 9773714.0315, 24.6446, 132151.6277</td></tr>
</table>
<table style="left:528px;top:2269px;width:499px">
<colgroup><col style="width:130px"><col style="width:113px"><col style="width:141px"><col style="width:115px"></colgroup>
<tr style="height:39px"><th>描述统计</th><th>值</th><th>描述统计</th><th>值</th></tr>
<tr style="height:39px"><td>样本数量</td><td>125</td><td>子组容量</td><td>5</td></tr>
<tr style="height:39px"><td>样本均值</td><td>25.0093</td><td>中位数</td><td>25.0061</td></tr>
<tr style="height:39px"><td>最大值</td><td>25.4802</td><td>最小值</td><td>24.8258</td></tr>
<tr style="height:39px"><td>方差</td><td>0.0053</td><td>标准差</td><td>0.0725</td></tr>
<tr style="height:39px"><td>偏度</td><td>2.024</td><td>峰度</td><td>14.2263</td></tr>
<tr style="height:39px"><td>变异系数</td><td>0.0029</td><td>极差</td><td>0.6544</td></tr>
<tr style="height:39px"><td>5%分位数</td><td>24.8963</td><td>95%分位数</td><td>25.1041</td></tr>
<tr style="height:39px"><td>1/4分位数</td><td>24.9797</td><td>3/4分位数</td><td>25.026</td></tr>
</table>
<div class="big" style="left:417px;top:2558px">分布拟合</div>
<div class="big" style="left:782px;top:2626px">描述性统计</div>

<!-- ========== ROW 6 ========== -->
<table style="left:16px;top:2765px;width:500px">
<colgroup><col style="width:149px"><col style="width:100px"><col style="width:150px"><col style="width:101px"></colgroup>
<tr style="height:39px"><th>PP</th><th>值</th><th>CP</th><th>值</th></tr>
<tr style="height:39px"><td>标准差(总体)</td><td>0.0725</td><td>标准差(组内)</td><td>0.0753</td></tr>
<tr style="height:39px"><td>PP</td><td>0.4599</td><td>CP</td><td>0.4427</td></tr>
<tr style="height:39px"><td>PPU</td><td>0.4172</td><td>CPU</td><td>0.4016</td></tr>
<tr style="height:39px"><td>PPL</td><td>0.5027</td><td>CPL</td><td>0.4839</td></tr>
<tr style="height:39px"><td>Ppk</td><td>0.4172</td><td>Cpk</td><td>0.4016</td></tr>
<tr style="height:39px"><td colspan="4">因为数据不符合正态分布，调整后的CPK: 0.3932</td></tr>
</table>
<svg style="left:0;top:0" width="1058" height="3100">
<rect x="595" y="2783" width="274" height="180" fill="#fff" stroke="#ccc"/>
<g stroke="#4472c4" stroke-width="1.5"><line x1="612" y1="2827" x2="851" y2="2827"/><line x1="608" y1="2872" x2="856" y2="2872"/><line x1="671" y1="2918" x2="781" y2="2918"/></g>
<g stroke="#d33" stroke-width="1"><line x1="612" y1="2824" x2="612" y2="2830"/><line x1="851" y1="2824" x2="851" y2="2830"/><line x1="732" y1="2824" x2="732" y2="2830"/><line x1="608" y1="2869" x2="608" y2="2875"/><line x1="856" y1="2869" x2="856" y2="2875"/><line x1="732" y1="2869" x2="732" y2="2875"/><line x1="671" y1="2915" x2="671" y2="2921"/><line x1="781" y1="2915" x2="781" y2="2921"/><line x1="726" y1="2915" x2="726" y2="2921"/></g>
<g font-size="8" fill="#333" text-anchor="middle" font-family="Liberation Sans,Noto Sans CJK SC"><text x="732" y="2820">整体</text><text x="732" y="2866">组内</text><text x="727" y="2912">规格限</text></g>
<g font-size="8" fill="#333" text-anchor="middle" font-family="Liberation Sans"><text x="616" y="2975">24.8</text><text x="671" y="2975">24.9</text><text x="726" y="2975">25.0</text><text x="781" y="2975">25.1</text><text x="836" y="2975">25.2</text></g>
</svg>
<div class="big" style="left:317px;top:3030px">过程能力表</div>
<div class="big" style="left:802px;top:3015px">能力对比图</div>

<!-- ========== ROW 7 ========== -->
<div style="position:absolute;left:16px;top:3183px;width:500px;height:333px;background:#f7f7f7"></div>
<svg style="left:0;top:0" width="1058" height="3600">
<defs>
<g id="mlp">
<rect x="0" y="0" width="227" height="62" fill="#fff" stroke="#999" stroke-width=".8"/>
<polyline points="8,45.6 16.8,40.9 25.6,48.4 34.4,43.5 43.2,57 52,39 60.8,23.2 69.6,41.3 78.4,41.6 87.2,35.9 96,30.6 104.8,43.3 113.6,50.2 122.4,35.9 131.2,32.1 140,41.3 148.8,45.8 157.6,40.9 166.4,37.6 175.2,40.2 184,39.8 192.8,43.3 201.6,28 210.4,5 219.2,38.7" fill="none" stroke="#bbb" stroke-width=".8"/>
<g fill="#22c"><circle cx="8" cy="45.6" r="1.4"/><circle cx="16.8" cy="40.9" r="1.4"/><circle cx="25.6" cy="48.4" r="1.4"/><circle cx="34.4" cy="43.5" r="1.4"/><circle cx="43.2" cy="57" r="1.4"/><circle cx="52" cy="39" r="1.4"/><circle cx="60.8" cy="23.2" r="1.4"/><circle cx="69.6" cy="41.3" r="1.4"/><circle cx="78.4" cy="41.6" r="1.4"/><circle cx="87.2" cy="35.9" r="1.4"/><circle cx="96" cy="30.6" r="1.4"/><circle cx="104.8" cy="43.3" r="1.4"/><circle cx="113.6" cy="50.2" r="1.4"/><circle cx="122.4" cy="35.9" r="1.4"/><circle cx="131.2" cy="32.1" r="1.4"/><circle cx="140" cy="41.3" r="1.4"/><circle cx="148.8" cy="45.8" r="1.4"/><circle cx="157.6" cy="40.9" r="1.4"/><circle cx="166.4" cy="37.6" r="1.4"/><circle cx="175.2" cy="40.2" r="1.4"/><circle cx="184" cy="39.8" r="1.4"/><circle cx="192.8" cy="43.3" r="1.4"/><circle cx="201.6" cy="28" r="1.4"/><circle cx="219.2" cy="38.7" r="1.4"/></g>
<circle cx="210.4" cy="5" r="2" fill="#e33"/>
<g font-size="4" fill="#555" font-family="Liberation Sans" text-anchor="middle"><text x="8" y="69">0</text><text x="34" y="69">3</text><text x="60" y="69">6</text><text x="87" y="69">9</text><text x="113" y="69">12</text><text x="140" y="69">15</text><text x="166" y="69">18</text><text x="192" y="69">21</text><text x="219" y="69">24</text></g>
<g font-size="4" fill="#555" font-family="Liberation Sans" text-anchor="end"><text x="-2" y="5">25.10</text><text x="-2" y="24">25.05</text><text x="-2" y="43">25.00</text></g>
</g>
</defs>
<use href="#mlp" x="36" y="3196"/><use href="#mlp" x="283" y="3196"/>
<use href="#mlp" x="36" y="3278"/><use href="#mlp" x="283" y="3278"/>
<use href="#mlp" x="36" y="3361"/><use href="#mlp" x="283" y="3361"/>
<use href="#mlp" x="36" y="3442"/><use href="#mlp" x="283" y="3442"/>
<g font-size="5" fill="#333" text-anchor="middle" font-family="Liberation Sans,Noto Sans CJK SC"><text x="149" y="3193">孤立森林</text><text x="396" y="3193">One-Class SVM</text><text x="149" y="3275">DBSCAN</text><text x="396" y="3275">LOF</text><text x="149" y="3358">K均值</text><text x="396" y="3358">高斯混合模型</text><text x="149" y="3439">自编码器</text><text x="396" y="3439">随机投影</text></g>
</svg>
<table style="left:528px;top:3161px;width:499px">
<colgroup><col style="width:70px"><col style="width:89px"><col style="width:65px"><col style="width:89px"><col style="width:88px"><col style="width:98px"></colgroup>
<tr style="height:39px"><th>来源</th><th>SS</th><th>df</th><th>MS</th><th>F</th><th>P-value</th></tr>
<tr style="height:39px"><td>组间</td><td>0.0231</td><td>4</td><td>0.0058</td><td>1.1019</td><td>0.3589</td></tr>
<tr style="height:39px"><td>组内</td><td>0.6283</td><td>120</td><td>0.0052</td><td></td><td></td></tr>
<tr style="height:39px"><td>合计</td><td>0.6514</td><td>124</td><td></td><td></td><td></td></tr>
</table>
<div class="big" style="left:279px;top:3325px">机器学习判异</div>
<div class="big" style="left:757px;top:3383px">方差分析</div>

<!-- ========== ABNORMAL ========== -->
<div style="position:absolute;left:24px;top:3655px;width:484px;height:380px;background:#f7f7f7"></div>
<div style="position:absolute;left:34px;top:3655px;width:464px;height:175px;background:#fff;box-shadow:0 1px 3px rgba(0,0,0,.06)"></div>
<div style="position:absolute;left:34px;top:3655px;width:464px;height:124px;background:#c5c8ea"></div>
<div style="position:absolute;left:34px;top:3845px;width:464px;height:180px;background:#fff;border-radius:6px 6px 0 0;box-shadow:0 1px 3px rgba(0,0,0,.06)"></div>
<div style="position:absolute;left:34px;top:3845px;width:464px;height:130px;background:#c5c8ea;border-radius:6px 6px 0 0"></div>
<svg style="left:0;top:0" width="600" height="4000">
<g fill="none" stroke="#fff" stroke-width="1.2"><path d="M52,3684 Q52,3673 57,3672 Q62,3673 62,3684 L64,3687 H50 Z M55,3689 H59"/><path d="M52,3890 Q52,3879 57,3878 Q62,3879 62,3890 L64,3893 H50 Z M55,3895 H59"/>
<polyline points="57,3743 60,3743 62,3736 64,3750 66,3743 70,3743" stroke="#eef0fb"/><polyline points="57,3939 60,3939 62,3932 64,3946 66,3939 70,3939" stroke="#eef0fb"/>
<path d="M153,3739 h11 v9 h-11 z M153,3742 h11 M153,3745 h11 M157,3739 v9 M160,3739 v9" stroke="#eef0fb" stroke-width=".8"/><path d="M153,3935 h11 v9 h-11 z M153,3938 h11 M153,3941 h11 M157,3935 v9 M160,3935 v9" stroke="#eef0fb" stroke-width=".8"/></g>
</svg>
<div class="t" style="left:73px;top:3661px;font-size:13px;color:#222;line-height:20px;width:420px;white-space:normal">2026-04-15 10:24:37 过程能力预警CPK=0.4016,制程很差，停线改进制程方可生产 PPK=0.4172,制程很差，停线改进制程方可生产</div>
<div class="t" style="left:78px;top:3736px;font-size:12px;color:#eef0fb">查看图形</div>
<div class="t" style="left:171px;top:3736px;font-size:12px;color:#eef0fb">详细信息</div>
<div class="t" style="left:73px;top:3866px;font-size:13px;color:#222;line-height:20px">2026-04-15 10:24:36 Xbar控制图 任意一点异常</div>
<div class="t" style="left:78px;top:3932px;font-size:12px;color:#eef0fb">查看图形</div>
<div class="t" style="left:171px;top:3932px;font-size:12px;color:#eef0fb">详细信息</div>
<div class="big" style="left:373px;top:3996px">异常信息和历史改进记录</div>

<!-- ========== DATA TABLE ========== -->
<div style="position:absolute;left:16px;top:4159px;width:1011px;height:1px;background:#e8e8e8"></div>
<svg style="left:0;top:0" width="1058" height="4210">
<g fill="none" stroke="#bbb"><rect x="912" y="4173" width="26" height="26"/><rect x="948" y="4173" width="26" height="26"/><rect x="984" y="4173" width="26" height="26"/></g>
<polyline points="917,4187 921,4187 923,4180 926,4194 928,4187 933,4187" fill="none" stroke="#555"/>
<g fill="none" stroke="#555"><rect x="955" y="4179" width="5" height="6"/><rect x="962" y="4179" width="5" height="6"/><path d="M956,4187 v6 M958,4187 v6 M963,4187 v6 M965,4187 v6"/></g>
<path d="M991,4190 h12 v5 h-12 z M997,4180 v8 M994,4184 l3,-4 l3,4" fill="#555" stroke="#555"/>
</svg>
<div style="position:absolute;left:16px;top:4208px;width:1011px;height:734px;overflow:hidden">
<table style="left:0;top:0;width:1041px;font-size:12.5px">
<colgroup><col style="width:62px"><col style="width:60px"><col style="width:181px"><col style="width:81px"><col style="width:81px"><col style="width:81px"><col style="width:81px"><col style="width:81px"><col style="width:91px"><col style="width:91px"><col style="width:91px"><col style="width:60px"></colgroup>
<tr style="height:39px"><th>ID</th><th>idx</th><th>检测时间</th><th>v1</th><th>v2</th><th>v3</th><th>v4</th><th>v5</th><th>均值</th><th>标准差</th><th>极差</th><th>机台</th></tr>
<tr class="pink" style="height:39px"><td>367</td><td>24</td><td>2026-04-15 10:24:06</td><td>25</td><td>25</td><td>25.023</td><td>25.025</td><td>25</td><td>25.0096</td><td>0.0132</td><td>0.0250</td><td>1</td></tr>
<tr class="pink" style="height:39px"><td>366</td><td>23</td><td>2025-12-31 00:00:00</td><td>24.94...</td><td>24.96...</td><td>25.01...</td><td>25.09...</td><td>25.48...</td><td>25.1009</td><td>0.2198</td><td>0.5341</td><td>A</td></tr>
<tr class="pink" style="height:39px"><td>365</td><td>22</td><td>2025-12-30 00:00:00</td><td>24.97...</td><td>24.96...</td><td>25.00...</td><td>25.15...</td><td>25.09...</td><td>25.0390</td><td>0.0837</td><td>0.1870</td><td>B</td></tr>
<tr class="pink" style="height:39px"><td>364</td><td>21</td><td>2025-12-29 00:00:00</td><td>24.96...</td><td>24.96...</td><td>24.99...</td><td>25.02...</td><td>25.03...</td><td>24.9975</td><td>0.0320</td><td>0.0697</td><td>A</td></tr>
<tr class="pink" style="height:39px"><td>363</td><td>20</td><td>2025-12-28 00:00:00</td><td>25.09...</td><td>24.97...</td><td>25.04...</td><td>24.97...</td><td>24.93...</td><td>25.0065</td><td>0.0661</td><td>0.1644</td><td>B</td></tr>
<tr class="pink" style="height:39px"><td>362</td><td>19</td><td>2025-12-27 00:00:00</td><td>25.00...</td><td>24.99...</td><td>24.98...</td><td>25.02...</td><td>25.00...</td><td>25.0044</td><td>0.0130</td><td>0.0345</td><td>A</td></tr>
<tr class="pink" style="height:39px"><td>361</td><td>18</td><td>2025-12-26 00:00:00</td><td>25.07...</td><td>24.94...</td><td>25.06...</td><td>24.91...</td><td>25.06...</td><td>25.0126</td><td>0.0762</td><td>0.1634</td><td>B</td></tr>
<tr class="pink" style="height:39px"><td>360</td><td>17</td><td>2025-12-25 00:00:00</td><td>24.99...</td><td>25.01...</td><td>25.01...</td><td>24.99...</td><td>24.98...</td><td>25.0032</td><td>0.0157</td><td>0.0353</td><td>A</td></tr>
<tr class="pink" style="height:39px"><td>359</td><td>16</td><td>2025-12-24 00:00:00</td><td>25.02...</td><td>24.86...</td><td>25.10...</td><td>24.98...</td><td>24.96...</td><td>24.9904</td><td>0.0849</td><td>0.2324</td><td>B</td></tr>
<tr class="pink" style="height:39px"><td>358</td><td>15</td><td>2025-12-23 00:00:00</td><td>24.98...</td><td>24.99...</td><td>25.04...</td><td>24.97...</td><td>25.00...</td><td>25.0024</td><td>0.0243</td><td>0.0634</td><td>A</td></tr>
<tr class="pink" style="height:39px"><td>357</td><td>14</td><td>2025-12-22 00:00:00</td><td>25.06...</td><td>24.98...</td><td>25.09...</td><td>24.98...</td><td>25.00...</td><td>25.0271</td><td>0.0511</td><td>0.1147</td><td>B</td></tr>
<tr class="pink" style="height:39px"><td>356</td><td>13</td><td>2025-12-21 00:00:00</td><td>24.99...</td><td>25.04...</td><td>25.04...</td><td>25.01...</td><td>24.99...</td><td>25.0168</td><td>0.0257</td><td>0.0558</td><td>A</td></tr>
<tr style="height:39px"><td>355</td><td>12</td><td>2025-12-20 00:00:00</td><td>24.95...</td><td>24.93...</td><td>24.88...</td><td>24.98...</td><td>25.13...</td><td>24.9784</td><td>0.0948</td><td>0.2509</td><td>B</td></tr>
<tr style="height:39px"><td>354</td><td>11</td><td>2025-12-19 00:00:00</td><td>25.01...</td><td>25.00...</td><td>24.99...</td><td>25.00...</td><td>24.96...</td><td>24.9970</td><td>0.0179</td><td>0.0462</td><td>A</td></tr>
<tr style="height:39px"><td>353</td><td>10</td><td>2025-12-18 00:00:00</td><td>24.89...</td><td>25.11...</td><td>25.10...</td><td>24.97...</td><td>25.01...</td><td>25.0315</td><td>0.1116</td><td>0.2850</td><td>B</td></tr>
<tr style="height:39px"><td>352</td><td>9</td><td>2025-12-17 00:00:00</td><td>25.02...</td><td>25.00...</td><td>25.03...</td><td>25.01...</td><td>25.00...</td><td>25.0171</td><td>0.0145</td><td>0.0343</td><td>A</td></tr>
<tr style="height:39px"><td>351</td><td>8</td><td>2025-12-16 00:00:00</td><td>24.83...</td><td>25.06...</td><td>24.95...</td><td>25.03...</td><td>25.12...</td><td>25.0015</td><td>0.1123</td><td>0.2906</td><td>B</td></tr>
<tr style="height:39px"><td>350</td><td>7</td><td>2025-12-15 00:00:00</td><td>25.00...</td><td>25.00...</td><td>25.00...</td><td>24.97...</td><td>25.00...</td><td>25.0026</td><td>0.0128</td><td>0.0301</td><td>A</td></tr>
</table>
</div>
<div class="big" style="left:504px;top:4809px">数据明细</div>

</body></html>
